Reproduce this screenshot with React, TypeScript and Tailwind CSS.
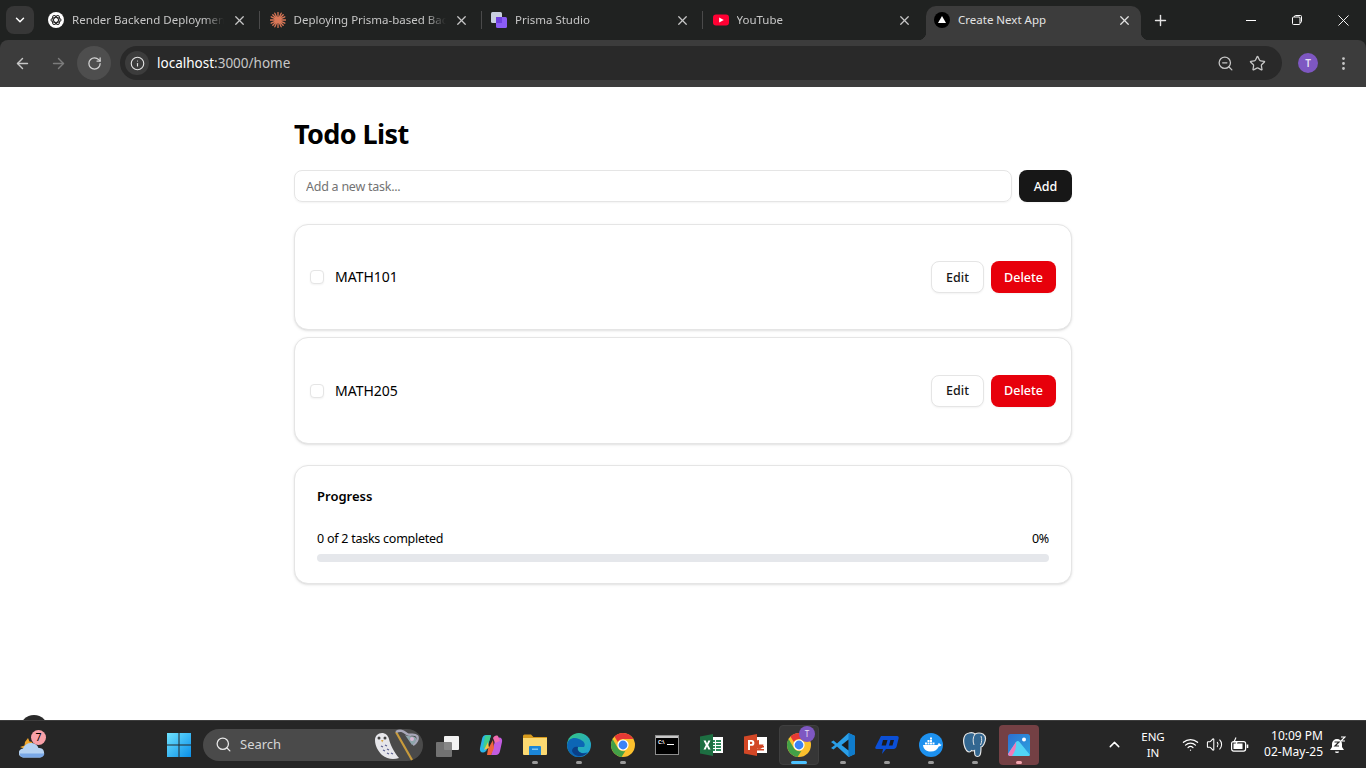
import { ReactNode } from "react";
import {
  ArrowLeft,
  ArrowRight,
  ChevronDown,
  ChevronUp,
  Info,
  MoreVertical,
  Plus,
  RotateCw,
  Search,
  Star,
  Volume2,
  Wifi,
  X,
  ZoomOut,
} from "lucide-react";

function OpenAiIcon() {
  return (
    <svg width="16" height="16" viewBox="0 0 16 16">
      <circle cx="8" cy="8" r="8" fill="#fff" />
      <g fill="none" stroke="#222" strokeWidth="1">
        <ellipse cx="8" cy="8" rx="5" ry="2.4" />
        <ellipse cx="8" cy="8" rx="5" ry="2.4" transform="rotate(60 8 8)" />
        <ellipse cx="8" cy="8" rx="5" ry="2.4" transform="rotate(120 8 8)" />
      </g>
    </svg>
  );
}

function ClaudeIcon() {
  return (
    <svg width="16" height="16" viewBox="0 0 16 16" stroke="#d97757" strokeWidth="1.3" strokeLinecap="round">
      <path d="M8 .5v15M.5 8h15M2.800 2.800l10.400 10.400M13.200 2.800 2.800 13.200M4.800 1.200l6.400 13.600M11.200 1.200 4.800 14.800M1.200 4.800l13.600 6.400M14.800 4.800 1.200 11.200" />
    </svg>
  );
}

function PrismaIcon() {
  return (
    <svg width="16" height="16" viewBox="0 0 16 16">
      <rect x="0" y="0" width="11" height="11" rx="1.5" fill="#c9cfe0" />
      <rect x="5" y="5" width="11" height="11" rx="1.5" fill="#8b5cf6" />
      <rect x="5" y="5" width="6" height="6" fill="#6d3fe0" />
    </svg>
  );
}

function YoutubeIcon() {
  return (
    <svg width="16" height="12" viewBox="0 0 16 12">
      <rect width="16" height="11" y="0.5" rx="3" fill="#ff0033" />
      <path d="M6.2 3.4 10.8 6l-4.6 2.6z" fill="#fff" />
    </svg>
  );
}

function NextIcon() {
  return (
    <svg width="16" height="16" viewBox="0 0 16 16" className="shrink-0">
      <circle cx="8" cy="8" r="8" fill="#000" />
      <path d="M8 4l4 7H4z" fill="#fff" />
    </svg>
  );
}

function WeatherIcon() {
  return (
    <svg width="26" height="28" viewBox="0 0 26 28">
      <path d="M9 7l1.500 3.500 3 .5-2 3 .5 3-3-1-3 2-5-2 4.500-1.500.5-3.500z" fill="#f0a62b" />
      <path d="M4.500 26.500a4.500 4.500 0 0 1-.5-9C5.500 13.500 9 11.500 13 12c3 .3 5.500 2 6.500 5a4.800 4.800 0 0 1 1.500 9.500z" fill="#b5d2f2" />
      <path d="M.5 22.500h25c-.5 2.500-2.500 4-4.500 4H4.500C2.500 26.500 1 25 .5 22.500z" fill="#7aa8e6" />
    </svg>
  );
}

function WindowsIcon() {
  return (
    <svg width="24" height="24" viewBox="0 0 24 24">
      <defs>
        <linearGradient id="winBlue" x1="0" y1="0" x2="1" y2="1">
          <stop offset="0" stopColor="#6fe3ff" />
          <stop offset="1" stopColor="#0a8fe8" />
        </linearGradient>
      </defs>
      <path d="M0 0h11.500v11.500H0zM12.500 0H24v11.500H12.500zM0 12.500h11.500V24H0zM12.500 12.500H24V24H12.500z" fill="url(#winBlue)" />
    </svg>
  );
}

function OwlHarp() {
  return (
    <svg width="48" height="32" viewBox="0 0 48 32">
      <path d="M2 11c0-4 3-7 7-7 3 0 6 2 7 6 1 5 5 13 10 19-6 2-12 1-17-3-4-4-7-9-7-15z" fill="#e6e6ea" />
      <circle cx="6" cy="9" r="1.500" fill="#444" />
      <circle cx="12" cy="9" r="1.500" fill="#444" />
      <path d="M8 11l1.200 2.500L10.500 11z" fill="#d9a441" />
      <path d="M8 17l2 1M12 16l2 1M10 21l2 1M14 20l2 1M14 24l2 1M18 24l2 1" stroke="#5b5f8f" strokeWidth="1.300" />
      <path d="M23 3l16 28" stroke="#c89b3c" strokeWidth="2.200" />
      <path d="M23 3c5-3 8 0 11 2s7-1 10 2c2 3-1 7-4 9" fill="none" stroke="#a7a7b8" strokeWidth="2.400" />
      <path d="M32 6c3 2 8 0 11 3 1 3-2 6-4 7z" fill="#8ea6ac" />
      <circle cx="39" cy="10" r="2" fill="#d9b9d6" />
    </svg>
  );
}

function TaskViewIcon() {
  return (
    <svg width="24" height="24" viewBox="0 0 24 24">
      <rect x="9" y="3" width="15" height="14" rx="1" fill="#f2f2f2" />
      <rect x="1" y="9" width="16" height="15" rx="1" fill="#7b7b7b" fillOpacity="0.9" />
    </svg>
  );
}

function CopilotIcon() {
  return (
    <svg width="24" height="24" viewBox="0 0 24 24">
      <path d="M7 2h5L8 16c-.5 2-2 3.500-4 3.500-2.500 0-3.500-2-3-4.500l2-9c.5-2.500 2-4 4-4z" fill="#28b4e8" />
      <path d="M6 3c2-1 5-1 6 0L8 14l-4 1z" fill="#3ecf8e" />
      <path d="M17 22h-5l4-14c.5-2 2-3.500 4-3.500 2.500 0 3.500 2 3 4.500l-2 9c-.5 2.500-2 4-4 4z" fill="#c25ce0" />
      <path d="M14 5c1-2 3-3 5-2l2 5-5 2z" fill="#f06cb0" />
      <path d="M9 16l5-9 1 8-3 7H8z" fill="#f0643c" />
      <path d="M5 17l4-8 1 6z" fill="#f5c542" />
    </svg>
  );
}

function FolderIcon() {
  return (
    <svg width="24" height="22" viewBox="0 0 24 22">
      <path d="M0 2a1.500 1.500 0 0 1 1.500-1.500H8l2.500 2.500H24v3H0z" fill="#d79a1c" />
      <path d="M0 4h24v16a1 1 0 0 1-1 1H1a1 1 0 0 1-1-1z" fill="#fbd971" />
      <path d="M6 13a1 1 0 0 1 1-1h10a1 1 0 0 1 1 1v8H6z" fill="#1b86d8" />
      <rect x="9" y="14.500" width="6" height="1.500" fill="#7cc4f2" />
    </svg>
  );
}

function EdgeIcon() {
  return (
    <svg width="24" height="24" viewBox="0 0 24 24">
      <defs>
        <linearGradient id="edgeA" x1="0" y1="0" x2="1" y2="1">
          <stop offset="0" stopColor="#37c77f" />
          <stop offset="1" stopColor="#1b9de2" />
        </linearGradient>
      </defs>
      <circle cx="12" cy="12" r="12" fill="url(#edgeA)" />
      <path d="M0 12C1 5 7 4 12 6c5 2 7 5 5 8h-6c-2 0-2 2 0 4 2 2 6 3 10 1-3 4-7 5-10 5C5 24 0 18 0 12z" fill="#0c66b5" />
      <path d="M11 14c-3-1-6 1-6 4 1 3 4 5 8 5 3 0 5-1 7-3-4 1-8 0-9-3-.500-1 0-2 0-3z" fill="#0a3f86" />
    </svg>
  );
}

function ChromeIcon() {
  return (
    <svg width="24" height="24" viewBox="0 0 24 24">
      <circle cx="12" cy="12" r="12" fill="#fbc02d" />
      <path d="M12 0a12 12 0 0 1 10.400 6H12a6 6 0 0 0-5.200 3L3.500 3.500A12 12 0 0 1 12 0z" fill="#e53935" />
      <path d="M1.600 6A12 12 0 0 0 10.500 23.900l4-6.200a6 6 0 0 1-7.700-2.700z" fill="#43a047" />
      <circle cx="12" cy="12" r="5.600" fill="#fff" />
      <circle cx="12" cy="12" r="4.400" fill="#3b82f6" />
    </svg>
  );
}

function CmdIcon() {
  return (
    <div className="w-6 h-5 border border-[#8d8d8d] bg-black">
      <div className="h-[2px] bg-[#c8c8c8]" />
      <div className="flex items-end gap-[2px] pl-[2px] pt-[1px]">
        <span className="text-[5px] leading-[7px] font-bold text-white">C:\</span>
        <span className="w-[7px] h-[1px] mb-[1px] bg-white" />
      </div>
    </div>
  );
}

function ExcelIcon() {
  return (
    <svg width="23" height="22" viewBox="0 0 23 22">
      <rect x="8" y="3" width="15" height="16" fill="#fff" />
      <path d="M11 6h4v2h-4zm5 0h5v2h-5zm-5 3h4v2h-4zm5 0h5v2h-5zm-5 3h4v2h-4zm5 0h5v2h-5zm-5 3h4v2h-4zm5 0h5v2h-5z" fill="#2b8a5a" />
      <path d="M0 2.500 13 0v22L0 19.500z" fill="#1d6f42" />
      <path d="M3.500 6.500h2.300L7 9.500l1.300-3h2.200L8.200 11l2.400 4.500H8.300L7 12.500l-1.300 3H3.500L5.800 11z" fill="#fff" />
    </svg>
  );
}

function PowerpointIcon() {
  return (
    <svg width="23" height="22" viewBox="0 0 23 22">
      <rect x="9" y="3" width="14" height="16" fill="#fff" />
      <path d="M15 6a4.500 4.500 0 1 0 4.500 4.500H15z" fill="#d24726" />
      <path d="M12 15h8v1.500h-8zM12 12h8v1.500h-8z" fill="#d24726" />
      <path d="M0 2.500 13 0v22L0 19.500z" fill="#d24726" />
      <path d="M4 6h3.500a2.800 2.800 0 0 1 0 5.800H6V16H4zm2 1.800v2.300h1.200a1.100 1.100 0 0 0 0-2.300z" fill="#fff" />
    </svg>
  );
}

function VscodeIcon() {
  return (
    <svg width="24" height="24" viewBox="0 0 24 24">
      <path d="M17.500 0 24 3v18l-6.500 3L6 13.500l-3.500 3L0 15l4-3-4-3 2.500-1.500 3.500 3z" fill="#2a9fe8" />
      <path d="M17.500 0 24 3v18l-6.500 3z" fill="#0f7ccc" />
      <path d="M17.500 6.500 10.500 12l7 5.500z" fill="#1c1c1c" />
    </svg>
  );
}

function RemoteIcon() {
  return (
    <svg width="24" height="20" viewBox="0 0 24 20">
      <path d="M6 1h16c1.500 0 2 1 1.600 2.500l-2 8c-.4 1.500-1.600 2.500-3 2.500H11l-4 5 1-5H1.500C.5 14 0 13 .4 12z" fill="#0b4fd6" />
      <path d="M8 5h11l-1.500 5.500H12l-1 1.500.4-1.500H6.600z" fill="#1c1c1c" />
      <path d="M13 3h3l-3 11h-3z" fill="#0b4fd6" />
    </svg>
  );
}

function DockerIcon() {
  return (
    <svg width="24" height="24" viewBox="0 0 24 24">
      <circle cx="12" cy="12" r="12" fill="#1d91ef" />
      <path d="M4 12h14c1 0 1.500-1 1.500-2 1 .2 1.600.8 1.800 1.500.6 0 1 .1 1.200.3-.5 1.200-1.500 1.700-2.700 1.700-1.300 3-4 5-8 5-5 0-7.300-2.500-7.800-6.500z" fill="#fff" />
      <path d="M6 9.500h2v2H6zm2.500 0h2v2h-2zm2.500 0h2v2h-2zm2.500 0h2v2h-2zM8.500 7h2v2h-2zM11 7h2v2h-2zm0-2.500h2v2h-2z" fill="#fff" />
    </svg>
  );
}

function PostgresIcon() {
  return (
    <svg width="24" height="26" viewBox="0 0 24 26">
      <path d="M6 1c3-.8 5 0 6 1 2-1 5-1.500 8 0 3 2 3 6 1 10-1 2-2 3-3 3 0 3 0 6-1 8-1 2-4 2-5 0-.5-1.500-.5-3-.5-4.500-1 .4-2 .4-3 0-1 2-3 2-5 0C1 15 0 9 1 6c.5-2.500 2.500-4.500 5-5z" fill="#336791" stroke="#e5e5e5" strokeWidth="1.200" />
      <path d="M12 2c-2 3-2.500 7-1 11M18 4c1 3 1 6-.5 9" fill="none" stroke="#e5e5e5" strokeWidth="1" />
    </svg>
  );
}

function PhotosIcon() {
  return (
    <svg width="22" height="22" viewBox="0 0 22 22">
      <defs>
        <linearGradient id="photoBg" x1="0" y1="0" x2="1" y2="1">
          <stop offset="0" stopColor="#2e6fd0" />
          <stop offset="1" stopColor="#2aa5e0" />
        </linearGradient>
      </defs>
      <rect width="22" height="22" rx="2.500" fill="url(#photoBg)" />
      <circle cx="16" cy="5.500" r="2" fill="#fff" />
      <path d="M0 20 8 8c1-1.500 2.500-1.500 3.500 0L22 21c-.3.700-1 1-2 1H2c-1 0-1.700-.8-2-2z" fill="#52d4f5" />
      <path d="M0 20 8 8c.500 5-1 10-4 14H2c-1 0-1.700-.8-2-2z" fill="#f07ab8" />
    </svg>
  );
}

function BatteryIcon() {
  return (
    <svg width="18" height="16" viewBox="0 0 18 16" fill="none" stroke="#fff" strokeWidth="1.200">
      <rect x="0.600" y="4.600" width="14" height="9.500" rx="2" />
      <rect x="2.500" y="6.500" width="9" height="5.500" fill="#fff" stroke="none" />
      <path d="M16.500 7.500v3.500" strokeWidth="1.600" />
      <path d="M5 .5 3 5h3L4.500 8.500" stroke="#fff" strokeWidth="1.100" />
    </svg>
  );
}

function BellIcon() {
  return (
    <svg width="16" height="18" viewBox="0 0 16 18" fill="#fff">
      <path d="M7 3a5 5 0 0 0-5 5v3l-2 3h14l-2-3V8a5 5 0 0 0-5-5z" />
      <path d="M5 15.500h4a2 1.500 0 0 1-4 0z" />
      <path d="M4.500 6h4.500L5 10h4" fill="none" stroke="#262626" strokeWidth="1.200" />
      <path d="M11 1h4l-4 4h4" fill="none" stroke="#fff" strokeWidth="1.100" />
    </svg>
  );
}

const tabs = [
  { title: "Render Backend Deployment", icon: <OpenAiIcon /> },
  { title: "Deploying Prisma-based Bac", icon: <ClaudeIcon /> },
  { title: "Prisma Studio", icon: <PrismaIcon /> },
  { title: "YouTube", icon: <YoutubeIcon /> },
];

function Tab({ title, icon, last }: { title: string; icon: ReactNode; last: boolean }) {
  return (
    <div className="flex items-center w-[221.5px] h-[34px] pb-1.5 pl-[11px] shrink-0">
      <span className="w-4 h-4 flex items-center justify-center shrink-0">{icon}</span>
      <span className="ml-2 w-[160px] shrink-0 whitespace-nowrap text-[11.5px] text-[#c7c7c7] [mask-image:linear-gradient(to_right,black_132px,transparent_152px)]">
        {title}
      </span>
      <X size={15} strokeWidth={2} className="text-[#c7c7c7] shrink-0" />
      {!last && <span className="ml-3 w-[1px] h-[18px] bg-[#4a4a4a] shrink-0" />}
    </div>
  );
}

function TitleBar() {
  return (
    <div className="flex items-end h-10 pl-1.5 bg-[#202221] shrink-0">
      <div className="flex items-center justify-center self-start mt-1.5 w-7 h-7 rounded-lg bg-[#373737] shrink-0">
        <ChevronDown size={14} strokeWidth={2.5} className="text-white" />
      </div>
      <div className="flex ml-[3px]">
        {tabs.map((t, i) => (
          <Tab key={t.title} title={t.title} icon={t.icon} last={i === tabs.length - 1} />
        ))}
      </div>
      {/* active tab */}
      <div className="relative flex items-center ml-[3px] w-[215px] h-[34px] pb-1.5 pl-2 pr-[9px] rounded-t-[10px] bg-[#3c3c3c] shrink-0">
        <span className="absolute left-[-8px] bottom-0 w-2 h-2 bg-[radial-gradient(circle_at_0_0,#202221_8px,#3c3c3c_8.5px)]" />
        <span className="absolute right-[-8px] bottom-0 w-2 h-2 bg-[radial-gradient(circle_at_100%_0,#202221_8px,#3c3c3c_8.5px)]" />
        <NextIcon />
        <span className="ml-2 flex-1 text-[11.5px] text-[#e3e3e3] whitespace-nowrap">Create Next App</span>
        <X size={15} strokeWidth={2} className="text-[#e3e3e3]" />
      </div>
      <div className="flex items-center self-start h-10 ml-[11px]">
        <Plus size={17} strokeWidth={2} className="text-[#e3e3e3]" />
      </div>
      <div className="flex items-center self-start h-10 ml-auto text-white">
        <div className="w-[46px] flex justify-center">
          <span className="w-[10px] h-[1px] bg-white" />
        </div>
        <div className="w-[46px] flex justify-center">
          <svg width="10" height="10" viewBox="0 0 10 10" fill="none" stroke="#fff" strokeWidth="1">
            <rect x="0.5" y="2" width="7.5" height="7.5" rx="1" />
            <path d="M2.5 2V1.500a1 1 0 0 1 1-1h5a1 1 0 0 1 1 1v5a1 1 0 0 1-1 1H8" />
          </svg>
        </div>
        <div className="w-[46px] flex justify-center">
          <X size={19} strokeWidth={1.2} />
        </div>
      </div>
    </div>
  );
}

function Toolbar() {
  return (
    <div className="flex items-center h-[47px] pb-[1px] bg-[#3c3c3c] rounded-t-lg shrink-0 relative">
      <div className="flex items-center pl-[5px]">
        <div className="w-[34px] h-[34px] flex items-center justify-center">
          <ArrowLeft size={17} strokeWidth={2} className="text-[#c7c7c7]" />
        </div>
        <div className="ml-[2px] w-[34px] h-[34px] flex items-center justify-center">
          <ArrowRight size={17} strokeWidth={2} className="text-[#7c7c7c]" />
        </div>
        <div className="ml-[2px] w-[34px] h-[34px] rounded-full bg-[#4e4e4e] flex items-center justify-center">
          <RotateCw size={15} strokeWidth={2} className="text-[#d4d4d4]" />
        </div>
      </div>
      <div className="flex items-center ml-[9px] w-[1162px] h-[34px] rounded-full bg-[#292929] pl-[5px]">
        <div className="w-6 h-6 rounded-full bg-[#3c3c3c] flex items-center justify-center">
          <Info size={15} strokeWidth={1.8} className="text-[#e3e3e3]" />
        </div>
        <span className="ml-2 text-[13.5px] text-white whitespace-nowrap">
          localhost<span className="text-[#c7c7c7]">:3000/home</span>
        </span>
        <ZoomOut size={17} strokeWidth={1.8} className="ml-auto text-[#c7c7c7]" />
        <Star size={17} strokeWidth={1.8} className="ml-[15px] mr-4 text-[#c7c7c7]" />
      </div>
      <div className="ml-[16px] w-5 h-5 rounded-full bg-[#7e57c2] flex items-center justify-center text-[10px] font-semibold text-[#e8e0f5]">
        T
      </div>
      <MoreVertical size={17} strokeWidth={2} className="ml-[17px] text-[#c7c7c7]" />
    </div>
  );
}

function TodoRow({ name }: { name: string }) {
  return (
    <div className="flex items-center justify-between h-[106.4px] pl-[15px] pr-[15px] bg-white rounded-[14px] border border-[#e5e5e5] shadow-sm">
      <div className="flex items-center">
        <span className="w-[14px] h-[14px] rounded border border-[#e5e5e5] shadow-xs bg-white" />
        <span className="ml-[11px] text-[14px] leading-5 text-black">{name}</span>
      </div>
      <div className="flex items-center gap-[7px]">
        <button className="w-[53px] h-8 pt-[2px] rounded-lg border border-[#e5e5e5] bg-white shadow-xs text-[12.5px] font-medium text-[#171717]">
          Edit
        </button>
        <button className="w-[65px] h-8 pt-[2px] rounded-lg bg-[#e7000b] shadow-xs text-[12.5px] font-medium text-white">
          Delete
        </button>
      </div>
    </div>
  );
}

function TodoPage() {
  return (
    <div className="relative flex-1 bg-white overflow-hidden">
      <div className="w-[778px] mx-auto pt-[29px]">
        <h1 className="text-[27px] leading-9 font-bold tracking-[-0.6px] text-black">Todo List</h1>
        <div className="flex items-center gap-[7px] mt-[18px]">
          <input
            readOnly
            placeholder="Add a new task..."
            className="flex-1 h-8 px-[11px] rounded-lg border border-[#e5e5e5] shadow-xs text-[12.5px] tracking-[-0.25px] placeholder:text-[#737373] outline-none"
          />
          <button className="w-[53px] h-8 pt-[2px] rounded-lg bg-[#171717] shadow-xs text-[12.5px] font-medium text-white">
            Add
          </button>
        </div>
        <div className="flex flex-col gap-[7px] mt-[22px]">
          <TodoRow name="MATH101" />
          <TodoRow name="MATH205" />
        </div>
        <div className="mt-[21.2px] h-[119px] px-[22px] pt-[20px] bg-white rounded-[14px] border border-[#e5e5e5] shadow-sm">
          <h2 className="text-[13px] leading-5 font-semibold text-black">Progress</h2>
          <div className="flex justify-between mt-[23px] text-[12.5px] tracking-[-0.25px] leading-5 text-black">
            <span>0 of 2 tasks completed</span>
            <span>0%</span>
          </div>
          <div className="mt-[5px] h-2 rounded-full bg-[#e5e7eb]" />
        </div>
      </div>
      {/* dev indicator peeking above the taskbar */}
      <span className="absolute left-[20px] bottom-[-23px] w-7 h-7 rounded-full bg-[#2a2a2a]" />
    </div>
  );
}

function TaskIcon({
  children,
  dot,
  tile,
}: {
  children: ReactNode;
  dot?: "gray" | "blue" | "pink";
  tile?: "active" | "red";
}) {
  return (
    <div className="relative flex items-center justify-center w-11 h-12 shrink-0">
      {tile === "active" && <span className="absolute w-10 h-10 rounded bg-[#363636] border border-[#3f3f3f]" />}
      {tile === "red" && <span className="absolute w-10 h-10 rounded bg-[#744044]" />}
      <span className="relative flex items-center justify-center">{children}</span>
      {dot === "gray" && <span className="absolute bottom-[5px] w-[6px] h-[3px] rounded-full bg-[#9a9a9a]" />}
      {dot === "blue" && <span className="absolute bottom-[5px] w-4 h-[3px] rounded-full bg-[#4cc2ff]" />}
      {dot === "pink" && <span className="absolute bottom-[5px] w-[6px] h-[3px] rounded-full bg-[#f4a6b0]" />}
    </div>
  );
}

function Taskbar() {
  return (
    <div className="flex items-center h-12 bg-[#262626] border-t border-[#3d3d3d] shrink-0 text-white">
      <div className="relative ml-[19px] w-[26px] h-7">
        <WeatherIcon />
        <span className="absolute left-[12px] top-[-1px] w-[15px] h-[15px] rounded-full bg-[#f8a0a8] flex items-center justify-center text-[10.5px] leading-none text-black">
          7
        </span>
      </div>
      <div className="ml-[122px] flex items-center justify-center w-6 h-6">
        <WindowsIcon />
      </div>
      <div className="ml-[12px] flex items-center w-[220px] h-8 rounded-full bg-[#4a4a4a] pl-[12px]">
        <Search size={17} strokeWidth={1.8} className="text-[#e8e8e8]" />
        <span className="ml-[8px] text-[13px] text-[#d6d6d6]">Search</span>
        <span className="ml-auto mr-[2px] flex">
          <OwlHarp />
        </span>
      </div>
      <div className="ml-[2px] flex">
        <TaskIcon><TaskViewIcon /></TaskIcon>
        <TaskIcon><CopilotIcon /></TaskIcon>
        <TaskIcon dot="gray"><FolderIcon /></TaskIcon>
        <TaskIcon dot="gray"><EdgeIcon /></TaskIcon>
        <TaskIcon dot="gray"><ChromeIcon /></TaskIcon>
        <TaskIcon><CmdIcon /></TaskIcon>
        <TaskIcon><ExcelIcon /></TaskIcon>
        <TaskIcon><PowerpointIcon /></TaskIcon>
        <TaskIcon dot="blue" tile="active">
          <ChromeIcon />
          <span className="absolute right-[-4px] top-[-7px] w-4 h-4 rounded-full bg-[#7e57c2] flex items-center justify-center text-[8px] text-[#e8e0f5]">
            T
          </span>
        </TaskIcon>
        <TaskIcon dot="gray"><VscodeIcon /></TaskIcon>
        <TaskIcon dot="gray"><RemoteIcon /></TaskIcon>
        <TaskIcon dot="gray"><DockerIcon /></TaskIcon>
        <TaskIcon dot="gray"><PostgresIcon /></TaskIcon>
        <TaskIcon dot="pink" tile="red"><PhotosIcon /></TaskIcon>
      </div>
      <ChevronUp size={17} strokeWidth={2} className="ml-[65px]" />
      <div className="ml-[15px] w-[30px] flex flex-col items-center text-[11.5px] leading-[16px]">
        <span>ENG</span>
        <span>IN</span>
      </div>
      <Wifi size={17} strokeWidth={1.8} className="ml-[14px]" />
      <Volume2 size={17} strokeWidth={1.5} className="ml-[7px]" />
      <span className="ml-[8px] flex">
        <BatteryIcon />
      </span>
      <div className="ml-auto pb-[1px] flex flex-col items-end text-[12px] leading-[16px]">
        <span>10:09 PM</span>
        <span>02-May-25</span>
      </div>
      <span className="ml-[7px] mr-[20px] flex">
        <BellIcon />
      </span>
    </div>
  );
}

export default function App() {
  return (
    <div className="flex flex-col h-screen overflow-hidden bg-[#202221] font-['Noto_Sans','Open_Sans',sans-serif]">
      <TitleBar />
      <Toolbar />
      <TodoPage />
      <Taskbar />
    </div>
  );
}
